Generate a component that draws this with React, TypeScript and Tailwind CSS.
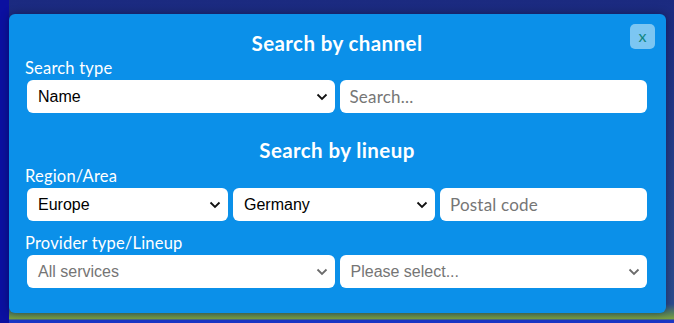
import type { ReactNode } from "react";

const ui = { fontFamily: 'Lato, "Open Sans", sans-serif' };
const sys = { fontFamily: '"Liberation Sans", Arial, sans-serif' };

function Chevron({ muted }: { muted?: boolean }) {
  return (
    <svg
      width="12"
      height="8"
      viewBox="0 0 12 8"
      className="pointer-events-none absolute right-[7px] top-1/2 -translate-y-1/2"
      fill="none"
      stroke={muted ? "#6b6b6b" : "#111111"}
      strokeWidth="1.8"
    >
      <path d="M1.5 1.5 L6 6 L10.5 1.5" />
    </svg>
  );
}

function Select({ value, muted, width = "flex-1 basis-0" }: { value: string; muted?: boolean; width?: string }) {
  return (
    <div className={`relative h-[33px] min-w-0 rounded-[6px] bg-white ${width}`}>
      <div
        className={`flex h-full items-center pl-[11px] text-[16px] ${muted ? "text-[#757575]" : "text-black"}`}
        style={sys}
      >
        {value}
      </div>
      <Chevron muted={muted} />
    </div>
  );
}

function TextInput({ placeholder }: { placeholder: string }) {
  return (
    <div className="h-[33px] min-w-0 flex-1 basis-0">
      <input
        placeholder={placeholder}
        className="h-full w-full rounded-[6px] bg-white pl-[10px] text-[17px] tracking-[0.2px] text-black outline-none placeholder:text-[#767676]"
        style={ui}
      />
    </div>
  );
}

function Heading({ children }: { children: ReactNode }) {
  return (
    <h2 className="text-center text-[20.5px] leading-[24px] font-bold tracking-[0.4px] text-white" style={ui}>
      {children}
    </h2>
  );
}

function Label({ children }: { children: ReactNode }) {
  return (
    <div className="text-[16.5px] leading-[20px] tracking-[0.2px] text-white" style={ui}>
      {children}
    </div>
  );
}

export default function App() {
  return (
    <div className="h-[323px] w-[674px] overflow-hidden bg-[linear-gradient(90deg,#0b10a0_0,#0b10a0_9px,transparent_9px),linear-gradient(180deg,#1b2a80_0px,#27408a_180px,#2b4b8e_304px,#557f5e_313px,#7aa040_319px,#1a36c4_320px)] pl-[9px] pt-[14px]">
      <div className="relative flex h-[299px] w-[657px] flex-col rounded-[6px] bg-[#0b90e9] pl-[18px] pr-[19px] pt-[17px] pb-[25px] shadow-[0_0_8px_rgba(0,0,20,0.4)]">
        <button
          className="absolute right-[11px] top-[10px] flex h-[25px] w-[25px] items-center justify-center rounded-[5px] bg-[#7cc6f2] pb-[2px] text-[16px] text-[#12857f]"
          style={ui}
        >
          x
        </button>

        <Heading>Search by channel</Heading>
        <div className="-mx-[2px] mt-[3px]">
          <Label>Search type</Label>
        </div>
        <div className="mt-[2px] flex gap-[5px]">
          <Select value="Name" />
          <TextInput placeholder="Search..." />
        </div>

        <div className="mt-[25px]">
          <Heading>Search by lineup</Heading>
        </div>
        <div className="-mx-[2px] mt-[4px]">
          <Label>Region/Area</Label>
        </div>
        <div className="mt-[2px] flex gap-[5px]">
          <Select value="Europe" width="w-[201px] shrink-0" />
          <Select value="Germany" width="w-[202px] shrink-0" />
          <TextInput placeholder="Postal code" />
        </div>

        <div className="-mx-[2px] mt-[12px]">
          <Label>Provider type/Lineup</Label>
        </div>
        <div className="mt-[2px] flex gap-[5px]">
          <Select value="All services" muted />
          <Select value="Please select..." muted />
        </div>
      </div>
    </div>
  );
}
